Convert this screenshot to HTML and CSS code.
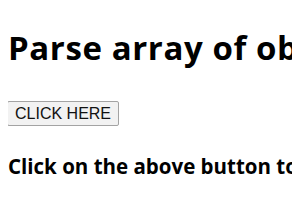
FILE: index.html
```html
<!DOCTYPE html>
<html>
<head>
    <title>Parse array of objects</title>
    <link rel="stylesheet" href="styles.css">
</head>
<body>
    <h1>Parse array of objects in JavaScript</h1>
    <button class="btn">CLICK HERE</button>
    <p class="note">Click on the above button to parse the array of objects.</p>
</body>
</html>
```
FILE: styles.css
```css
body {
    font-family: "Open Sans", "Noto Sans", sans-serif;
    color: #000;
    white-space: nowrap;
    overflow: hidden;
}

h1 {
    font-size: 33px;
    letter-spacing: 0.6px;
    margin: 17px 0 31px 0;
}

.btn {
    display: block;
    margin-left: -1px;
    font-family: "Liberation Sans", Arial, sans-serif;
    font-size: 16px;
    line-height: 18px;
    padding: 3px 7px 2px 7px;
    color: #111;
    background-color: #f2f2f2;
    border: 1px solid #a3a3a3;
    border-radius: 2px;
}

.note {
    font-size: 20.5px;
    font-weight: bold;
    margin: 26px 0;
}
```
